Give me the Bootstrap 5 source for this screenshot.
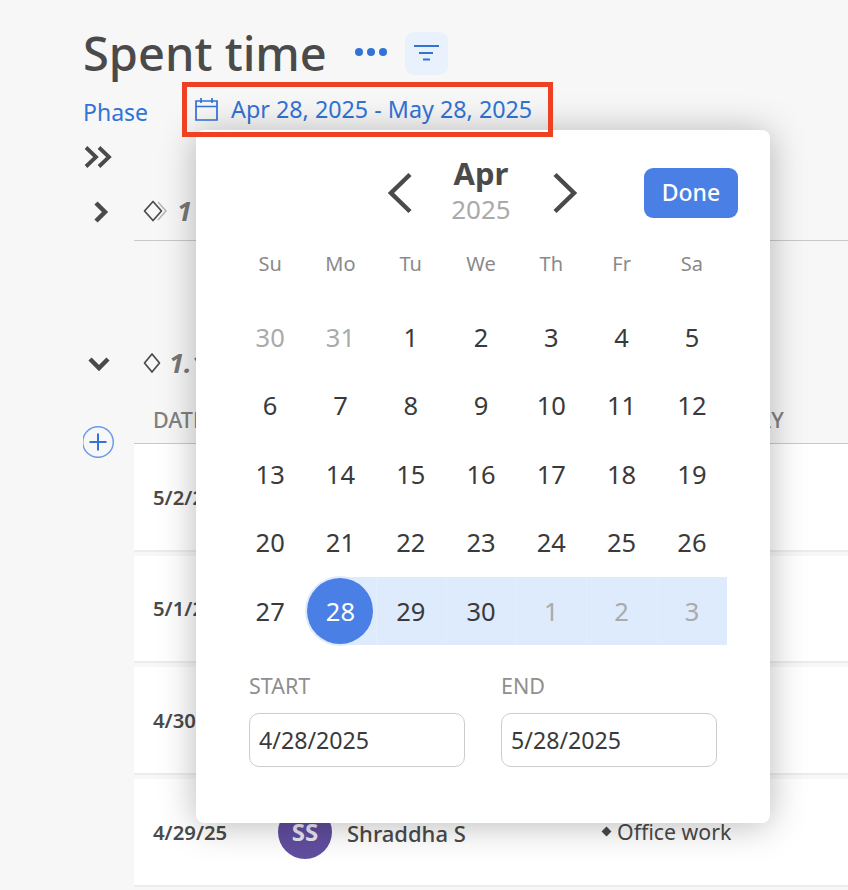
<!DOCTYPE html>
<html lang="en">
<head>
<meta charset="utf-8">
<title>Spent time</title>
<link href="https://cdn.jsdelivr.net/npm/bootstrap@5.3.0/dist/css/bootstrap.min.css" rel="stylesheet">
<style>
html,body{height:890px;overflow:hidden}
body{background:#f7f7f7;color:#4a4a4a;font-family:"Noto Sans",sans-serif}
.sp-page{position:relative;height:890px;padding-left:83px;overflow:hidden}
.sp-title-row{margin-top:28px;height:50px}
.sp-title{font-size:47px;font-weight:500;color:#4a4a4a;margin:0;line-height:50px;font-family:"Noto Sans",sans-serif}
.sp-dots{margin-left:28px;margin-top:-2px;display:block}
.sp-filter{width:43px;height:43px;margin-left:18px;background:#e9f1fc;border:0;border-radius:9px;padding:0}
.sp-filter-row{height:44px;margin-top:10px}
.sp-phase{font-size:23px;color:#3273d6;text-decoration:none;line-height:32px;margin-top:8px}
.sp-range{margin-left:47px;color:#3273d6;font-size:23.3px;line-height:32px;text-decoration:none;gap:13px;margin-top:5px}
.sp-expand{margin-top:10px;height:30px;line-height:0;padding-top:3px}
.sp-gutter{width:51px;flex:none}
.sp-pane{flex:1 1 auto;min-width:0}
.sp-group-one{height:69px}
.sp-group-one .sp-pane{border-bottom:1px solid #c9c9c9;padding:10px 0 0 9px;margin-left:1px;overflow:hidden}
.sp-group-one .sp-gutter{padding:26px 0 0 10px;margin-right:-1px}
.sp-group-two{height:54px;margin-top:97px}
.sp-group-two .sp-pane{padding:0 0 4px 9px;overflow:hidden}
.sp-group-two .sp-gutter{padding:13px 0 0 5px}
.sp-group-label{font-size:27px;font-weight:700;font-style:italic;color:#777;white-space:nowrap;line-height:32px}
.sp-table .sp-gutter{padding-top:34px}
.sp-th{height:52px;border-bottom:1px solid #c9c9c9;font-size:21.5px;font-weight:500;color:#808080;line-height:26px;padding-top:15px}
.sp-th-date{width:62px;padding-left:19px;overflow:hidden;flex:none}
.sp-th-cat{padding-left:479px}
.sp-tr{background:#fff;height:107.7px;margin-bottom:4px;border-bottom:2px solid #ececec}
.sp-td-date{width:144px;padding-left:19px;font-size:20.3px;font-weight:600;color:#4a4a4a;flex:none}
.sp-td-clip{width:62px;overflow:hidden;white-space:nowrap}
.sp-avatar{width:54px;height:54px;border-radius:50%;background:#614e9e;color:#eae6f3;font-size:24px;font-weight:700;flex:none}
.sp-name{margin:4px 0 0 15px;font-size:22px;font-weight:500;color:#4a4a4a;width:254px;flex:none}
.sp-cat{font-size:21.3px;color:#4a4a4a;gap:7px}
.sp-bullet{width:7px;height:7px;background:#4a4a4a;transform:rotate(45deg);margin-left:2px;flex:none}
.sp-pop{position:absolute;left:196px;top:130px;width:574px;height:693px;background:#fff;border-radius:8px;box-shadow:0 2px 36px rgba(0,0,0,.28);padding:26px 32px 0 39px}
.sp-cal-head{height:70px;padding-left:151px}
.sp-arrow{flex:none;margin-top:4px;display:block}
.sp-month{width:80px;margin:0 31px 0 28px;padding-bottom:2px;text-align:center;flex:none}
.sp-month-name{font-size:31px;font-weight:700;line-height:36px;color:#4a4a4a}
.sp-year{font-size:26px;line-height:32px;color:#aaa;margin-top:2px}
.sp-done{width:94px;height:50px;background:#4a7fe6;border:0;color:#fff;border-radius:9px;font-size:23px;font-weight:500;padding:0 0 2px;margin-top:4px;margin-left:auto}
.sp-done:hover{background:#4a7fe6;color:#fff}
.sp-week,.sp-days{display:grid;grid-template-columns:repeat(7,70.3px);width:492.1px;text-align:center}
.sp-week{margin-top:26px;height:24px;line-height:24px;font-size:20px;color:#8a8a8a}
.sp-days{margin-top:26.5px;grid-auto-rows:68.5px;font-size:25.5px;color:#3a3a3a}
.sp-day{line-height:68.5px}
.sp-off{color:#aaa}
.sp-band{background:#deebfc;box-shadow:inset 1px 0 0 #e3eefd}
.sp-start{position:relative;color:#fff;background:linear-gradient(to right,transparent 50%,#deebfc 50%)}
.sp-dot{display:block;width:66px;height:66px;margin:1px auto 0;border-radius:50%;background:#4a7fe6;box-shadow:0 0 0 2px #deebfc;line-height:66px}
.sp-inputs{margin-top:28.5px;padding-left:14px;gap:36px}
.sp-field{width:216px}
.sp-label{font-size:21.5px;line-height:24px;color:#8f8f8f;margin:0 0 15px}
.sp-input{height:54px;border:1.5px solid #ccc;border-radius:10px;font-size:23.2px;color:#3a3a3a;padding:0 9px;font-family:"Noto Sans",sans-serif}
.sp-redbox{position:absolute;left:182px;top:82px;width:371px;height:55px;border:5px solid #ee4023;pointer-events:none}
</style>
</head>
<body>
<div class="sp-page">
  <div class="sp-title-row d-flex align-items-center">
    <h1 class="sp-title">Spent time</h1>
    <svg class="sp-dots" width="32" height="8" viewBox="0 0 32 8" aria-hidden="true"><circle cx="4" cy="4" r="4" fill="#3273d6"/><circle cx="16" cy="4" r="4" fill="#3273d6"/><circle cx="28" cy="4" r="4" fill="#3273d6"/></svg>
    <button class="sp-filter d-flex align-items-center justify-content-center" type="button" aria-label="Filter">
      <svg width="27" height="18" viewBox="0 0 27 18"><path d="M1 2h25M6 9h14M10 15.500h7" stroke="#3273d6" stroke-width="2" fill="none"/></svg>
    </button>
  </div>

  <div class="sp-filter-row d-flex align-items-start">
    <a class="sp-phase" href="#">Phase</a>
    <a class="sp-range d-flex align-items-center" href="#">
      <svg width="23" height="24" viewBox="0 0 23 24" aria-hidden="true"><path d="M1 4h21v19H1zM1 9.500h21M6 1v5M17 1v5" stroke="#3273d6" stroke-width="1.700" fill="none"/></svg>
      <span>Apr 28, 2025 - May 28, 2025</span>
    </a>
  </div>

  <div class="sp-expand">
    <svg width="30" height="24" viewBox="0 0 30 24" aria-hidden="true"><path d="M3 2.500l10 9.500-10 9.500M16 2.500l10 9.500-10 9.500" stroke="#4a4a4a" stroke-width="3.800" fill="none"/></svg>
  </div>

  <div class="sp-group-one d-flex">
    <div class="sp-gutter">
      <svg width="16" height="22" viewBox="0 0 16 22" aria-hidden="true"><path d="M3 2l9 9-9 9" stroke="#4a4a4a" stroke-width="4.500" fill="none"/></svg>
    </div>
    <div class="sp-pane d-flex align-items-center gap-2">
      <svg width="26" height="24" viewBox="0 0 26 24" aria-hidden="true"><path d="M15 3l8 9-8 9" stroke="#b5b5b5" stroke-width="1.500" fill="none"/><path d="M10 2.500l8.500 9.500-8.500 9.500L1.500 12z" stroke="#4a4a4a" stroke-width="1.700" fill="#f7f7f7" stroke-linejoin="round"/></svg>
      <span class="sp-group-label">1</span>
    </div>
  </div>

  <div class="sp-group-two d-flex">
    <div class="sp-gutter">
      <svg width="22" height="16" viewBox="0 0 22 16" aria-hidden="true"><path d="M2 2l9 9 9-9" stroke="#4a4a4a" stroke-width="4.500" fill="none"/></svg>
    </div>
    <div class="sp-pane d-flex align-items-center gap-2">
      <svg width="18" height="22" viewBox="0 0 18 22" aria-hidden="true"><path d="M9 2l7.500 9L9 20l-7.500-9z" stroke="#4a4a4a" stroke-width="1.700" fill="none" stroke-linejoin="round"/></svg>
      <span class="sp-group-label">1.1</span>
    </div>
  </div>

  <div class="sp-table d-flex">
    <div class="sp-gutter">
      <svg width="32" height="32" viewBox="0 0 32 32" class="d-block" aria-hidden="true"><circle cx="15" cy="16" r="15.300" stroke="#6a9ce8" stroke-width="1.500" fill="none"/><path d="M6.500 16h17M15 7.500v17" stroke="#3273d6" stroke-width="2" fill="none"/></svg>
    </div>
    <div class="sp-pane">
      <div class="sp-th d-flex">
        <div class="sp-th-date">DATE</div>
        <div class="sp-th-cat">CATEGORY</div>
      </div>
      <div class="sp-tr d-flex align-items-center">
        <div class="sp-td-date sp-td-clip">5/2/25</div>
      </div>
      <div class="sp-tr d-flex align-items-center">
        <div class="sp-td-date sp-td-clip">5/1/25</div>
      </div>
      <div class="sp-tr d-flex align-items-center">
        <div class="sp-td-date sp-td-clip">4/30/25</div>
      </div>
      <div class="sp-tr d-flex align-items-center">
        <div class="sp-td-date">4/29/25</div>
        <div class="sp-avatar d-flex align-items-center justify-content-center">SS</div>
        <div class="sp-name">Shraddha S</div>
        <div class="sp-cat d-flex align-items-center"><span class="sp-bullet"></span>Office work</div>
      </div>
    </div>
  </div>

  <div class="sp-pop">
    <div class="sp-cal-head d-flex align-items-center">
      <svg class="sp-arrow" width="27" height="42" viewBox="0 0 27 42" aria-hidden="true"><path d="M24 2.500L5 21l19 18.500" stroke="#4a4a4a" stroke-width="4.500" fill="none"/></svg>
      <div class="sp-month">
        <div class="sp-month-name">Apr</div>
        <div class="sp-year">2025</div>
      </div>
      <svg class="sp-arrow" width="27" height="42" viewBox="0 0 27 42" aria-hidden="true"><path d="M3 2.500L22 21 3 39.500" stroke="#4a4a4a" stroke-width="4.500" fill="none"/></svg>
      <button class="btn sp-done" type="button">Done</button>
    </div>
    <div class="sp-week"><div>Su</div><div>Mo</div><div>Tu</div><div>We</div><div>Th</div><div>Fr</div><div>Sa</div></div>
    <div class="sp-days">
      <div class="sp-day sp-off">30</div><div class="sp-day sp-off">31</div><div class="sp-day">1</div><div class="sp-day">2</div><div class="sp-day">3</div><div class="sp-day">4</div><div class="sp-day">5</div>
      <div class="sp-day">6</div><div class="sp-day">7</div><div class="sp-day">8</div><div class="sp-day">9</div><div class="sp-day">10</div><div class="sp-day">11</div><div class="sp-day">12</div>
      <div class="sp-day">13</div><div class="sp-day">14</div><div class="sp-day">15</div><div class="sp-day">16</div><div class="sp-day">17</div><div class="sp-day">18</div><div class="sp-day">19</div>
      <div class="sp-day">20</div><div class="sp-day">21</div><div class="sp-day">22</div><div class="sp-day">23</div><div class="sp-day">24</div><div class="sp-day">25</div><div class="sp-day">26</div>
      <div class="sp-day">27</div><div class="sp-day sp-start"><span class="sp-dot">28</span></div><div class="sp-day sp-band">29</div><div class="sp-day sp-band">30</div><div class="sp-day sp-band sp-off">1</div><div class="sp-day sp-band sp-off">2</div><div class="sp-day sp-band sp-off">3</div>
    </div>
    <div class="sp-inputs d-flex">
      <div class="sp-field">
        <label class="sp-label d-block" for="sp-start-date">START</label>
        <input id="sp-start-date" class="form-control sp-input" type="text" value="4/28/2025">
      </div>
      <div class="sp-field">
        <label class="sp-label d-block" for="sp-end-date">END</label>
        <input id="sp-end-date" class="form-control sp-input" type="text" value="5/28/2025">
      </div>
    </div>
  </div>
  <div class="sp-redbox"></div>
</div>
<script src="https://cdn.jsdelivr.net/npm/bootstrap@5.3.0/dist/js/bootstrap.bundle.min.js"></script>
</body>
</html>
